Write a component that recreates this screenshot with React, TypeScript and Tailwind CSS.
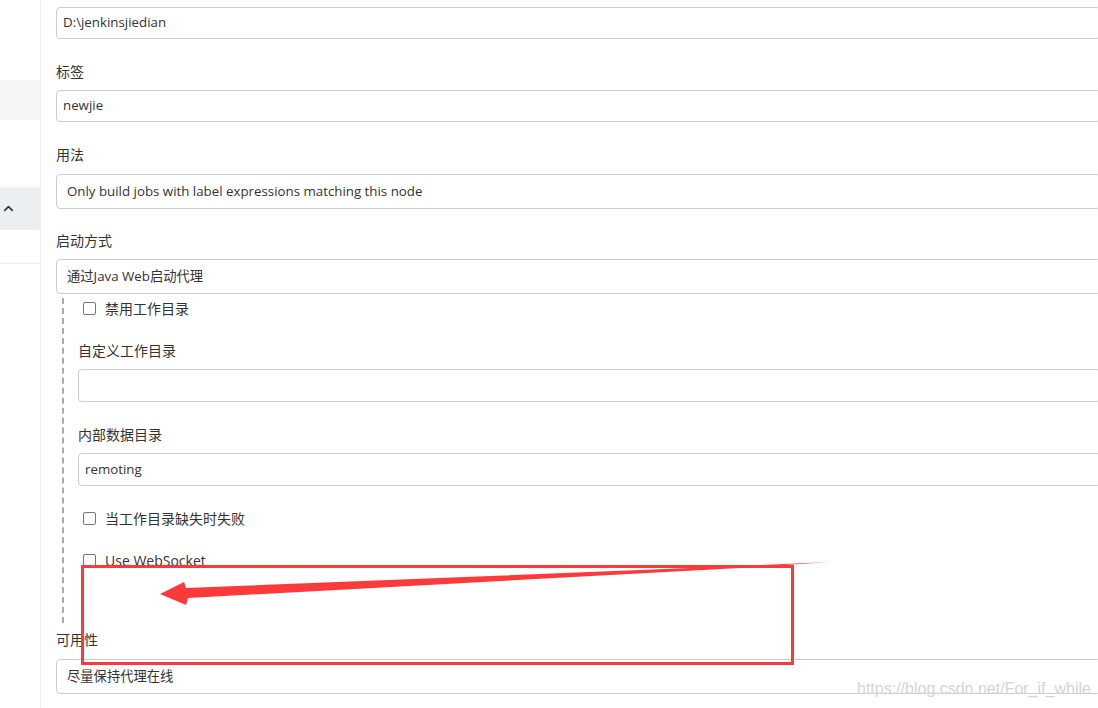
import { ChevronUp } from "lucide-react";
import type { ReactNode } from "react";

const font = {
  fontFamily: '"Open Sans", "Noto Sans CJK SC", sans-serif',
};

function Label({ children, className = "" }: { children: ReactNode; className?: string }) {
  return (
    <div className={"h-[20px] text-[14px] leading-[20px] text-[#333] " + className}>
      {children}
    </div>
  );
}

function TextInput({
  value,
  tall,
  className = "",
}: {
  value?: string;
  tall?: boolean;
  className?: string;
}) {
  return (
    <div
      className={
        "flex items-center rounded-[4px] border border-[#ccc] bg-white text-[13.3px] text-[#333] " +
        (tall ? "h-[35px] pl-[10px] " : "pl-[6px] ") +
        className
      }
    >
      {value}
    </div>
  );
}

function Checkbox({ label, className = "" }: { label: string; className?: string }) {
  return (
    <div className={"ml-[5px] flex h-[20px] items-center gap-[9px] text-[14px] text-[#333] " + className}>
      <span className="h-[13px] w-[13px] rounded-[2px] border border-[#767676] bg-white" />
      <span>{label}</span>
    </div>
  );
}

export default function App() {
  return (
    <div className="relative flex h-[708px] w-[1098px] overflow-hidden bg-white" style={font}>
      {/* sidebar */}
      <aside className="flex w-[41px] shrink-0 flex-col border-r border-[#eee]">
        <div className="h-[80px]" />
        <div className="h-[40px] bg-[#f6f6f6]" />
        <div className="h-[67px]" />
        <div className="flex h-[43px] items-center bg-[#eceff1] pl-[1px]">
          <ChevronUp size={15} strokeWidth={2.6} className="text-[#333]" />
        </div>
        <div className="h-[34px] border-b border-[#eee]" />
      </aside>

      {/* form */}
      <main className="w-[1060px] shrink-0 pl-[15px] pt-[7px]">
        <TextInput value="D:\jenkinsjiedian" className="h-[32px]" />

        <Label className="mt-[23px]">标签</Label>
        <TextInput value="newjie" className="mt-[8px] h-[32px]" />

        <Label className="mt-[23px]">用法</Label>
        <TextInput tall value="Only build jobs with label expressions matching this node" className="mt-[9px]" />

        <Label className="mt-[22px]">启动方式</Label>
        <TextInput tall value="通过Java Web启动代理" className="mt-[8px]" />

        <div className="ml-[6px] mt-[4px] border-l-2 border-dashed border-[#aaa] pb-[53px] pl-[14px]">
          <Checkbox label="禁用工作目录" className="mt-[2px]" />

          <Label className="mt-[23px]">自定义工作目录</Label>
          <TextInput className="mt-[8px] h-[33px]" />

          <Label className="mt-[23px]">内部数据目录</Label>
          <TextInput value="remoting" className="mt-[8px] h-[33px]" />

          <Checkbox label="当工作目录缺失时失败" className="mt-[22px]" />
          <Checkbox label="Use WebSocket" className="mt-[22px]" />
        </div>

        <Label className="mt-[7px]">可用性</Label>
        <TextInput tall value="尽量保持代理在线" className="mt-[9px]" />
      </main>

      {/* annotation */}
      <div className="absolute left-[81px] top-[565px] h-[100px] w-[713px] border-[3px] border-[#fc3a3a]" />
      <svg className="pointer-events-none absolute left-0 top-0" width="1098" height="708">
        <polygon
          points="830,562 740,566 186,588 184,582 160,594 186,605 188,598 740,568"
          fill="#fc3a3a"
        />
      </svg>

      <div
        className="absolute left-[857px] top-[680px] text-[16px] leading-[18px] text-[#d4d4d4]"
        style={{ fontFamily: '"Liberation Sans", Arial, sans-serif' }}
      >
        https://blog.csdn.net/For_if_while
      </div>
    </div>
  );
}
